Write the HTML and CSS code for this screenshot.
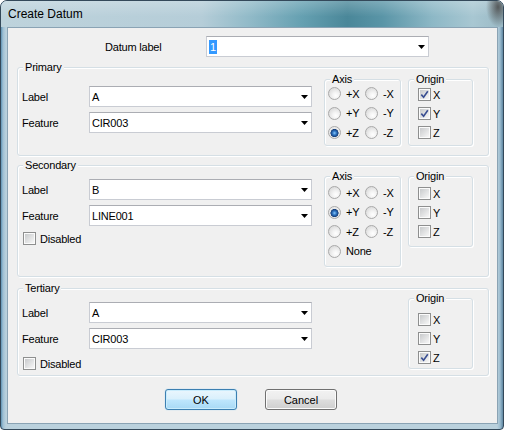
FILE: index.html
```html
<!DOCTYPE html>
<html>
<head>
<meta charset="utf-8">
<title>Create Datum</title>
<link rel="stylesheet" href="styles.css">
</head>
<body>
<div class="window">
  <div class="titlebar">Create Datum</div>
  <div class="client">
    <div class="datum-row">
      <span class="datum-label">Datum label</span>
      <div class="combo wide"><span class="sel">1</span><svg class="arrow" width="7" height="4" viewBox="0 0 7 4"><polygon points="0,0 7,0 3.5,4" fill="#000"/></svg></div>
    </div>

    <div class="group primary">
      <div class="legend">Primary</div>
      <div class="group-body">
        <div class="fields">
          <div class="field"><span class="flabel">Label</span><div class="combo"><span>A</span><svg class="arrow" width="7" height="4" viewBox="0 0 7 4"><polygon points="0,0 7,0 3.5,4" fill="#000"/></svg></div></div>
          <div class="field"><span class="flabel">Feature</span><div class="combo"><span>CIR003</span><svg class="arrow" width="7" height="4" viewBox="0 0 7 4"><polygon points="0,0 7,0 3.5,4" fill="#000"/></svg></div></div>
        </div>
        <div class="subgroup axis">
          <div class="legend">Axis</div>
          <div class="radios">
            <span class="radio"><i class="rb"></i>+X</span>
            <span class="radio"><i class="rb"></i>-X</span>
            <span class="radio"><i class="rb"></i>+Y</span>
            <span class="radio"><i class="rb"></i>-Y</span>
            <span class="radio"><i class="rb on"></i>+Z</span>
            <span class="radio"><i class="rb"></i>-Z</span>
          </div>
        </div>
        <div class="subgroup origin">
          <div class="legend">Origin</div>
          <div class="checks">
            <span class="check"><i class="cb"><svg width="9" height="9" viewBox="0 0 9 9"><path d="M1.3 4.6 L3.6 7.2 L7.8 1.2" fill="none" stroke="#3a4f92" stroke-width="1.6"/></svg></i>X</span>
            <span class="check"><i class="cb"><svg width="9" height="9" viewBox="0 0 9 9"><path d="M1.3 4.6 L3.6 7.2 L7.8 1.2" fill="none" stroke="#3a4f92" stroke-width="1.6"/></svg></i>Y</span>
            <span class="check"><i class="cb"></i>Z</span>
          </div>
        </div>
      </div>
    </div>

    <div class="group secondary">
      <div class="legend">Secondary</div>
      <div class="group-body">
        <div class="fields">
          <div class="field"><span class="flabel">Label</span><div class="combo"><span>B</span><svg class="arrow" width="7" height="4" viewBox="0 0 7 4"><polygon points="0,0 7,0 3.5,4" fill="#000"/></svg></div></div>
          <div class="field"><span class="flabel">Feature</span><div class="combo"><span>LINE001</span><svg class="arrow" width="7" height="4" viewBox="0 0 7 4"><polygon points="0,0 7,0 3.5,4" fill="#000"/></svg></div></div>
          <span class="check disabled"><i class="cb"></i>Disabled</span>
        </div>
        <div class="subgroup axis">
          <div class="legend">Axis</div>
          <div class="radios">
            <span class="radio"><i class="rb"></i>+X</span>
            <span class="radio"><i class="rb"></i>-X</span>
            <span class="radio"><i class="rb on"></i>+Y</span>
            <span class="radio"><i class="rb"></i>-Y</span>
            <span class="radio"><i class="rb"></i>+Z</span>
            <span class="radio"><i class="rb"></i>-Z</span>
            <span class="radio"><i class="rb"></i>None</span>
          </div>
        </div>
        <div class="subgroup origin">
          <div class="legend">Origin</div>
          <div class="checks">
            <span class="check"><i class="cb"></i>X</span>
            <span class="check"><i class="cb"></i>Y</span>
            <span class="check"><i class="cb"></i>Z</span>
          </div>
        </div>
      </div>
    </div>

    <div class="group tertiary">
      <div class="legend">Tertiary</div>
      <div class="group-body">
        <div class="fields">
          <div class="field"><span class="flabel">Label</span><div class="combo"><span>A</span><svg class="arrow" width="7" height="4" viewBox="0 0 7 4"><polygon points="0,0 7,0 3.5,4" fill="#000"/></svg></div></div>
          <div class="field"><span class="flabel">Feature</span><div class="combo"><span>CIR003</span><svg class="arrow" width="7" height="4" viewBox="0 0 7 4"><polygon points="0,0 7,0 3.5,4" fill="#000"/></svg></div></div>
          <span class="check disabled"><i class="cb"></i>Disabled</span>
        </div>
        <div class="subgroup origin">
          <div class="legend">Origin</div>
          <div class="checks">
            <span class="check"><i class="cb"></i>X</span>
            <span class="check"><i class="cb"></i>Y</span>
            <span class="check"><i class="cb"><svg width="9" height="9" viewBox="0 0 9 9"><path d="M1.3 4.6 L3.6 7.2 L7.8 1.2" fill="none" stroke="#3a4f92" stroke-width="1.6"/></svg></i>Z</span>
          </div>
        </div>
      </div>
    </div>

    <div class="buttons">
      <button class="btn default">OK</button>
      <button class="btn">Cancel</button>
    </div>
  </div>
</div>
</body>
</html>
```

FILE: styles.css
```css
* { box-sizing: border-box; }

body {
  margin: 0;
  background: #ffffff;
  font-family: "Liberation Sans", Arial, sans-serif;
  font-size: 11px;
  letter-spacing: -0.2px;
  color: #000;
}

.window {
  width: 504px;
  height: 430px;
  border: 1px solid #34495a;
  border-radius: 7px 7px 4px 4px;
  background:
    linear-gradient(90deg, #5f93b4 0px, #9fc0d4 2px, #bad1dd 5px, #bad1dd 496px, #9dbdd0 499px, #5f87a2 502px);
  padding: 0 5px 5px 6px;
  display: flex;
  flex-direction: column;
  overflow: hidden;
}

.titlebar {
  height: 26px;
  margin: 0 -5px 0 -6px;
  padding-left: 7px;
  line-height: 26px;
  font-size: 12px;
  letter-spacing: 0;
  color: #000;
  background:
    radial-gradient(ellipse 12px 20px at 497px 6px, rgba(70,70,70,0.85), rgba(70,70,70,0) 100%),
    linear-gradient(180deg, rgba(255,255,255,0.22), rgba(255,255,255,0) 60%),
    linear-gradient(90deg, #bed3dc 0%, #b5cdd8 40%, #8fb9c7 50%, #65a0b1 60%, #4a8799 69%, #5a95a7 76%, #8db8c6 86%, #a8c7d2 94%, #9ab9c5 100%);
}

.client {
  flex: 1;
  background: #f0f0f0;
  border: 1px solid #8aa3b4;
  display: flex;
  flex-direction: column;
}

/* Datum label row */
.datum-row {
  display: flex;
  align-items: center;
  height: 21px;
  margin-top: 8px;
  padding-left: 97px;
}
.datum-label { width: 101px; }

.combo {
  width: 223px;
  height: 21px;
  background: #fff;
  border: 1px solid #c9ccd3;
  border-top-color: #abadb3;
  display: flex;
  align-items: center;
  justify-content: space-between;
  padding: 0 3px 0 2px;
}
.combo .arrow { flex: none; }
.sel {
  background: #3399ff;
  color: #fff;
  padding: 0 1px;
  line-height: 14px;
}

/* Group boxes */
.group,
.subgroup {
  border: 1px solid #d5dfe5;
  border-radius: 3px;
  box-shadow: inset 1px 1px 0 #fff, 1px 1px 0 #fff;
}
.group {
  margin: 0 8px 0 9px;
}
.legend {
  width: max-content;
  margin: -7px 0 0 5px;
  padding: 0 2px;
  line-height: 13px;
  background: #f0f0f0;
}

.primary   { margin-top: 10px; height: 89px; }
.secondary { margin-top: 9px;  height: 112px; }
.tertiary  { margin-top: 11px; height: 88px; }

.group-body {
  display: flex;
  align-items: flex-start;
  padding-left: 4px;
}

.fields {
  display: flex;
  flex-direction: column;
  gap: 5px;
}
.primary .fields { margin-top: 12px; }
.secondary .fields,
.tertiary .fields { margin-top: 7px; }

.field {
  display: flex;
  align-items: center;
  height: 21px;
}
.flabel { width: 67px; }

.axis {
  width: 77px;
  margin-left: 12px;
}
.origin {
  width: 65px;
  margin-left: auto;
  margin-right: 15px;
}
.primary .axis,
.primary .origin { margin-top: 5px; height: 67px; }
.secondary .axis { margin-top: 4px; height: 91px; }
.secondary .origin { margin-top: 4px; height: 71px; }
.tertiary .origin { margin-top: 3px; height: 71px; }

/* Radios */
.radios {
  display: grid;
  grid-template-columns: 37px 37px;
  grid-auto-rows: 19.5px;
  align-items: center;
  padding-left: 3px;
}
.primary .radios { margin-top: -2px; }
.secondary .radios { margin-top: 0; }

.radio {
  display: flex;
  align-items: center;
  white-space: nowrap;
}
.rb {
  flex: none;
  width: 13px;
  height: 13px;
  margin-right: 5px;
  border-radius: 50%;
  border: 1px solid #a9a9a9;
  background: radial-gradient(circle at 62% 68%, #ffffff 0, #f4f4f4 30%, #d8d8d8 85%);
}
.rb.on {
  background: radial-gradient(circle at 50% 55%, #8fcaf5 0, #3a82cf 1.6px, #1c4f92 3.2px, #183f78 3.8px, #e6e6e6 4.3px, #f7f7f7 100%);
}

/* Checkboxes */
.checks {
  display: grid;
  grid-auto-rows: 19px;
  align-items: center;
  padding-left: 9px;
}
.primary .checks { margin-top: -1px; }
.secondary .checks { margin-top: 1px; }
.tertiary .checks { margin-top: 5px; }

.check {
  display: flex;
  align-items: center;
  white-space: nowrap;
}
.cb {
  flex: none;
  width: 13px;
  height: 13px;
  margin-right: 2px;
  border: 1px solid #8e8f8f;
  padding: 1px;
  background: linear-gradient(135deg, #c8cacc, #f7f7f7) content-box, #fbfbfb;
  display: flex;
}
.cb svg { display: block; }

.check.disabled {
  height: 13px;
  margin-left: 1px;
}
.check.disabled .cb { margin-right: 4px; }
.secondary .check.disabled { margin-top: 1px; }
.tertiary .check.disabled { margin-top: 3px; }

/* Buttons */
.buttons {
  display: flex;
  gap: 28px;
  margin-top: 13px;
  padding-left: 157px;
}
.btn {
  width: 72px;
  height: 21px;
  padding: 0;
  font: inherit;
  color: #000;
  border: 1px solid #707070;
  border-radius: 3px;
  background: linear-gradient(180deg, #f2f2f2 0%, #ebebeb 48%, #dddddd 52%, #cfcfcf 100%);
  box-shadow: inset 0 0 0 1px #fbfbfb;
}
.btn.default {
  border-color: #3c7fb1;
  background: linear-gradient(180deg, #eaf6fd 0%, #d9f0fc 48%, #bee6fd 52%, #a7d9f5 100%);
  box-shadow: inset 0 0 0 1px #c9ecfc, 0 0 1px #6dc3ee;
}
```
